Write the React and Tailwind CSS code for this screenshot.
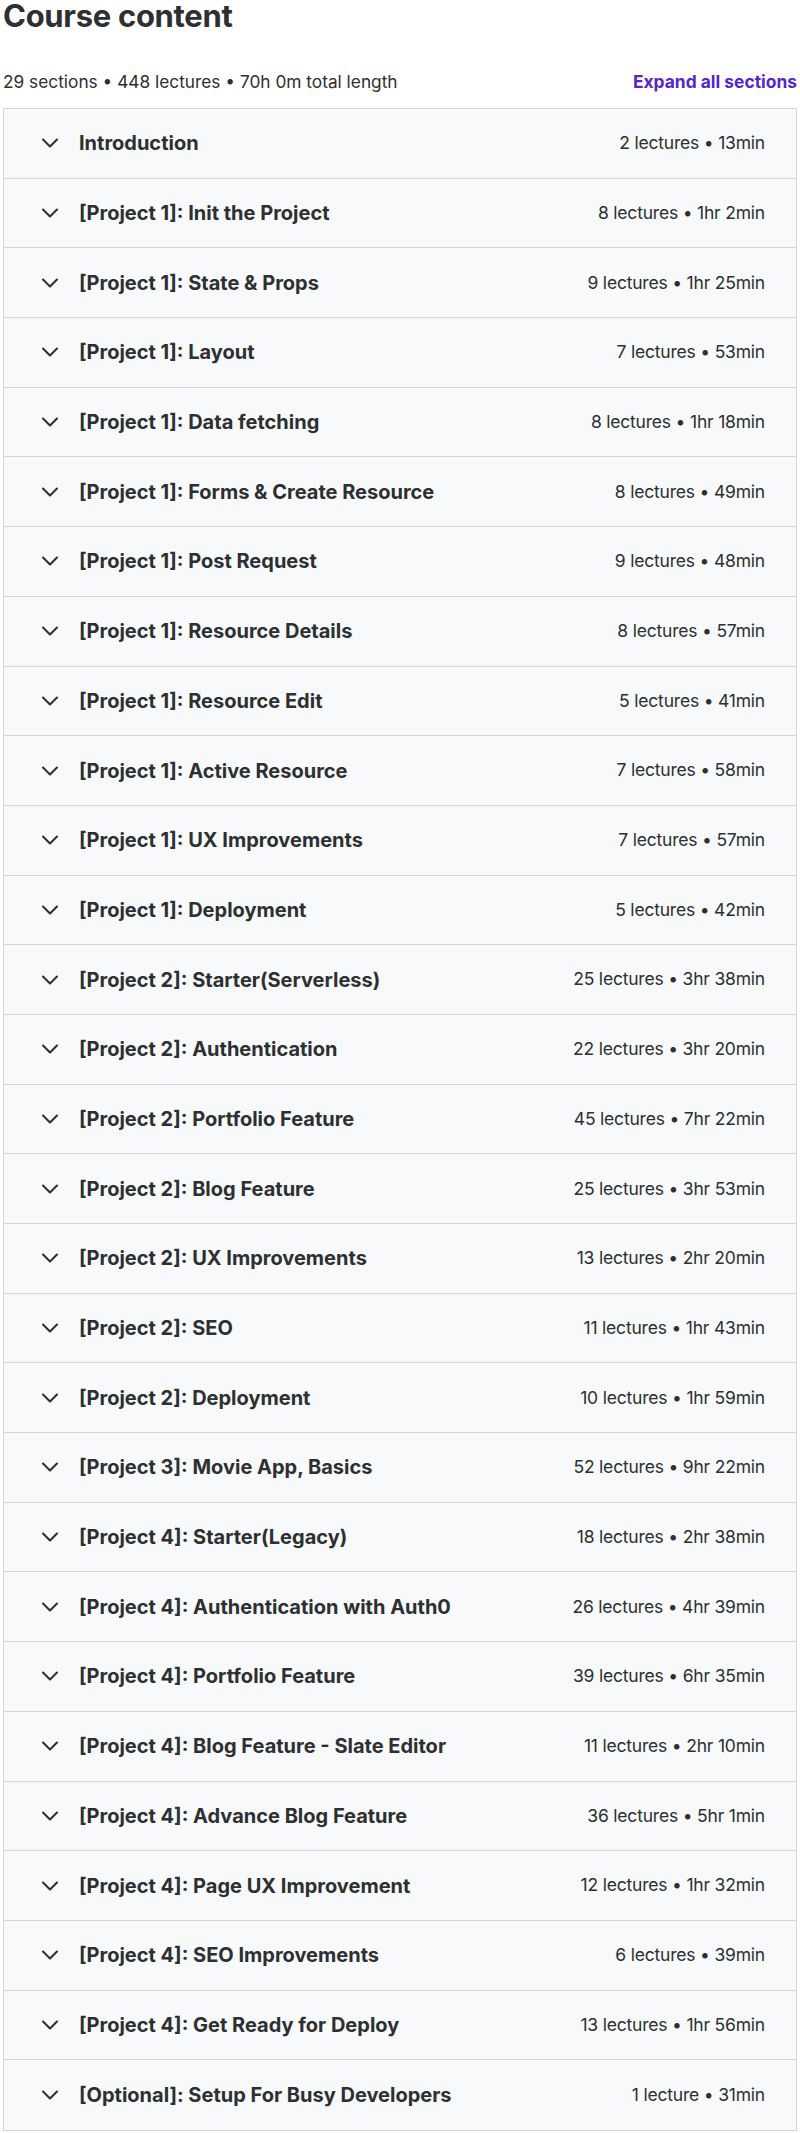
import { ChevronDown } from 'lucide-react';

const sections = [
    ['Introduction', '2 lectures • 13min'],
    ['[Project 1]: Init the Project', '8 lectures • 1hr 2min'],
    ['[Project 1]: State & Props', '9 lectures • 1hr 25min'],
    ['[Project 1]: Layout', '7 lectures • 53min'],
    ['[Project 1]: Data fetching', '8 lectures • 1hr 18min'],
    ['[Project 1]: Forms & Create Resource', '8 lectures • 49min'],
    ['[Project 1]: Post Request', '9 lectures • 48min'],
    ['[Project 1]: Resource Details', '8 lectures • 57min'],
    ['[Project 1]: Resource Edit', '5 lectures • 41min'],
    ['[Project 1]: Active Resource', '7 lectures • 58min'],
    ['[Project 1]: UX Improvements', '7 lectures • 57min'],
    ['[Project 1]: Deployment', '5 lectures • 42min'],
    ['[Project 2]: Starter(Serverless)', '25 lectures • 3hr 38min'],
    ['[Project 2]: Authentication', '22 lectures • 3hr 20min'],
    ['[Project 2]: Portfolio Feature', '45 lectures • 7hr 22min'],
    ['[Project 2]: Blog Feature', '25 lectures • 3hr 53min'],
    ['[Project 2]: UX Improvements', '13 lectures • 2hr 20min'],
    ['[Project 2]: SEO', '11 lectures • 1hr 43min'],
    ['[Project 2]: Deployment', '10 lectures • 1hr 59min'],
    ['[Project 3]: Movie App, Basics', '52 lectures • 9hr 22min'],
    ['[Project 4]: Starter(Legacy)', '18 lectures • 2hr 38min'],
    ['[Project 4]: Authentication with Auth0', '26 lectures • 4hr 39min'],
    ['[Project 4]: Portfolio Feature', '39 lectures • 6hr 35min'],
    ['[Project 4]: Blog Feature - Slate Editor', '11 lectures • 2hr 10min'],
    ['[Project 4]: Advance Blog Feature', '36 lectures • 5hr 1min'],
    ['[Project 4]: Page UX Improvement', '12 lectures • 1hr 32min'],
    ['[Project 4]: SEO Improvements', '6 lectures • 39min'],
    ['[Project 4]: Get Ready for Deploy', '13 lectures • 1hr 56min'],
    ['[Optional]: Setup For Busy Developers', '1 lecture • 31min'],
];

const App = () => {
    return (
        <div className="w-[800px] px-[3px] bg-white text-[#2d2f31] font-['Inter',sans-serif]">
            <h2 className="text-[31px] leading-[32px] font-bold tracking-[-0.3px]">Course content</h2>

            {/* Summary line */}
            <div className="mt-[38px] mb-[14px] h-[24px] flex items-center justify-between">
                <span className="text-[17.3px]">29 sections • 448 lectures • 70h 0m total length</span>
                <button className="text-[17.4px] font-bold text-[#5624d0]">Expand all sections</button>
            </div>

            {/* Sections */}
            <div className="border border-[#d1d7dc]">
                {sections.map(([title, meta], i) => (
                    <div
                        key={title}
                        className={`h-[69.7px] bg-[#f7f9fa] flex items-center pl-[32px] pr-[31px] ${i < sections.length - 1 ? 'border-b border-[#d1d7dc]' : ''}`}
                    >
                        <ChevronDown className="w-[28px] h-[28px] shrink-0" strokeWidth={1.8} />
                        <span className="ml-[15px] flex-1 text-[20px] font-bold">{title}</span>
                        <span className="text-[17.5px] tracking-[-0.2px]">{meta}</span>
                    </div>
                ))}
            </div>
        </div>
    );
};

export default App;
